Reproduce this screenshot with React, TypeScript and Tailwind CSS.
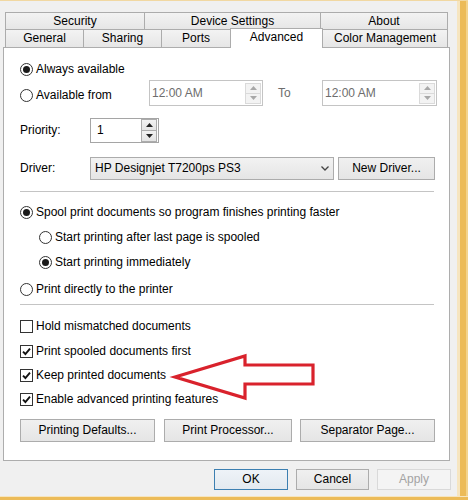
import React from 'react';

const Radio = ({ checked }: { checked?: boolean }) => (
  <span className="flex h-[13px] w-[13px] shrink-0 items-center justify-center rounded-full border border-[#333333] bg-white">
    {checked && <span className="h-[7px] w-[7px] rounded-full bg-[#1a1a1a]" />}
  </span>
);

const Check = ({ checked }: { checked?: boolean }) => (
  <span className="flex h-[13px] w-[13px] shrink-0 items-center justify-center border border-[#333333] bg-white">
    {checked && (
      <svg width="9" height="9" viewBox="0 0 9 9">
        <path d="M1 4.6 L3.4 7 L8 1.6" stroke="#111" strokeWidth="1.9" fill="none" />
      </svg>
    )}
  </span>
);

const Tri = ({ up, color }: { up?: boolean; color: string }) => (
  <svg width="7" height="4" viewBox="0 0 7 4">
    <path d={up ? 'M0 4 L3.5 0 L7 4 Z' : 'M0 0 L3.5 4 L7 0 Z'} fill={color} />
  </svg>
);

const Spin = ({ dim }: { dim?: boolean }) => {
  const cls = dim
    ? 'flex h-[11px] w-[16px] items-center justify-center border border-[#dadada] bg-[#f3f3f3]'
    : 'flex h-[12px] w-[16px] items-center justify-center border border-[#acacac] bg-linear-to-b from-[#f2f2f2] to-[#e4e4e4]';
  const c = dim ? '#a8a8a8' : '#222';
  return (
    <div className="flex flex-col">
      <div className={cls}>
        <Tri up color={c} />
      </div>
      <div className={cls + ' -mt-px'}>
        <Tri color={c} />
      </div>
    </div>
  );
};

const TimeBox = ({ w }: { w: string }) => (
  <div className={`flex h-[26px] ${w} items-center justify-between border border-[#c4c4c4] bg-white pl-[2px] pr-px text-[#6d6d6d]`}>
    <span>12:00 AM</span>
    <Spin dim />
  </div>
);

const Btn = ({ label, w, kind }: { label: string; w: string; kind?: 'def' | 'off' }) => {
  let cls = 'border-[#acacac] bg-linear-to-b from-[#f0f0f0] to-[#e5e5e5] text-black';
  if (kind === 'def') cls = 'border-[#3c7fb1] bg-linear-to-b from-[#eef3f8] to-[#e3e9ef] text-black';
  if (kind === 'off') cls = 'border-[#d9d9d9] bg-[#f4f4f4] text-[#a3a3a3]';
  return <div className={`flex h-full ${w} items-center justify-center border ${cls}`}>{label}</div>;
};

const RadioRow = ({ label, checked, cls }: { label: string; checked?: boolean; cls: string }) => (
  <div className={`flex h-[20px] items-center gap-[3px] ${cls}`}>
    <Radio checked={checked} />
    <span>{label}</span>
  </div>
);

const CheckRow = ({ label, checked, cls }: { label: string; checked?: boolean; cls: string }) => (
  <div className={`flex h-[20px] items-center gap-[3px] ${cls}`}>
    <Check checked={checked} />
    <span>{label}</span>
  </div>
);

const tabBase = 'flex items-center justify-center border-t border-l border-[#acacac] bg-linear-to-b from-[#f3f3f3] to-[#e6e6e6]';

export default function App() {
  return (
    <div className="relative flex h-[500px] w-[468px] flex-col border-t border-[#f1d8a2] bg-[#f0f0f0] font-['Liberation_Sans',Arial,sans-serif] text-[12px] leading-[15px] text-black">
      <div className="flex flex-1">
        <div className="flex flex-1 flex-col pl-[3px]">
          {/* tabs */}
          <div className="ml-[2px] mt-[11px] flex w-[443px] flex-col">
            <div className="flex h-[17px]">
              <div className={`${tabBase} w-[139px]`}>Security</div>
              <div className={`${tabBase} w-[176px]`}>Device Settings</div>
              <div className={`${tabBase} w-[128px] border-r`}>About</div>
            </div>
            <div className="flex h-[18px] items-end">
              <div className={`${tabBase} h-[18px] w-[78px]`}>General</div>
              <div className={`${tabBase} h-[18px] w-[78px]`}>Sharing</div>
              <div className={`${tabBase} h-[18px] w-[69px]`}>Ports</div>
              <div className="relative top-px z-10 flex h-[20px] w-[93px] items-center justify-center border-x border-t border-[#acacac] bg-white pb-[2px]">
                Advanced
              </div>
              <div className={`${tabBase} h-[18px] w-[125px] border-l-0 border-r`}>Color Management</div>
            </div>
          </div>

          {/* panel */}
          <div className="flex h-[414px] w-[447px] flex-col border border-[#adadad] bg-white pl-[16px]">
            <RadioRow label="Always available" checked cls="mt-[11px]" />

            <div className="mt-px flex h-[26px] items-center">
              <div className="mt-[4px] flex w-[129px] items-center gap-[3px]">
                <Radio />
                <span>Available from</span>
              </div>
              <TimeBox w="w-[114px]" />
              <div className="w-[59px] pl-[15px] text-[#6d6d6d]">To</div>
              <TimeBox w="w-[115px]" />
            </div>

            <div className="mt-[12px] flex h-[25px] items-center">
              <div className="w-[70px]">Priority:</div>
              <div className="flex h-full w-[69px] items-center justify-between border border-[#a5a5a5] pl-[6px] pr-px">
                <span>1</span>
                <Spin />
              </div>
            </div>

            <div className="mt-[14px] flex h-[23px] items-center">
              <div className="w-[70px]">Driver:</div>
              <div className="flex h-full w-[244px] items-center justify-between border border-[#acacac] bg-linear-to-b from-[#f2f2f2] to-[#e5e5e5] pl-[4px] pr-[4px]">
                <span>HP Designjet T7200ps PS3</span>
                <svg width="8" height="5" viewBox="0 0 8 5">
                  <path d="M0.5 0.5 L4 4 L7.5 0.5" stroke="#444" strokeWidth="1.3" fill="none" />
                </svg>
              </div>
              <div className="ml-[4px] h-full">
                <Btn label="New Driver..." w="w-[97px]" />
              </div>
            </div>

            <div className="mt-[11px] h-px w-[414px] bg-[#c4c4c4]" />

            <RadioRow label="Spool print documents so program finishes printing faster" checked cls="mt-[10px]" />
            <RadioRow label="Start printing after last page is spooled" cls="mt-[5px] pl-[19px]" />
            <RadioRow label="Start printing immediately" checked cls="mt-[5px] pl-[19px]" />
            <RadioRow label="Print directly to the printer" cls="mt-[7px]" />

            <div className="mt-[5px] h-px w-[414px] bg-[#c4c4c4]" />

            <CheckRow label="Hold mismatched documents" cls="mt-[11px]" />
            <CheckRow label="Print spooled documents first" checked cls="mt-[5px]" />
            <CheckRow label="Keep printed documents" checked cls="mt-[4px]" />
            <CheckRow label="Enable advanced printing features" checked cls="mt-[4px]" />

            <div className="mt-[10px] flex h-[23px]">
              <Btn label="Printing Defaults..." w="w-[135px]" />
              <div className="ml-[9px] h-full">
                <Btn label="Print Processor..." w="w-[128px]" />
              </div>
              <div className="ml-[8px] h-full">
                <Btn label="Separator Page..." w="w-[135px]" />
              </div>
            </div>
          </div>

          {/* dialog buttons */}
          <div className="mt-[8px] flex h-[21px] justify-end gap-[8px] pr-[6px]">
            <Btn label="OK" w="w-[74px]" kind="def" />
            <Btn label="Cancel" w="w-[73px]" />
            <Btn label="Apply" w="w-[74px]" kind="off" />
          </div>
        </div>
        <div className="w-[11px] bg-[linear-gradient(to_right,#f6e5c0_0,#f6e5c0_3px,#ecbb58_3px,#ecbb58_9px,#f3d38c_9px)]" />
      </div>
      <div className="h-[4px] bg-[linear-gradient(to_bottom,#f6e5c0_0,#f6e5c0_1px,#ecbb58_1px)]" />

      {/* red annotation arrow */}
      <svg className="pointer-events-none absolute left-0 top-0" width="468" height="500" viewBox="0 0 468 500">
        <polygon
          points="175,376 245,355 245,364 313,364 313,383 245,383 245,397"
          fill="none"
          stroke="#d9222c"
          strokeWidth="3.2"
          strokeLinejoin="miter"
        />
      </svg>
    </div>
  );
}
